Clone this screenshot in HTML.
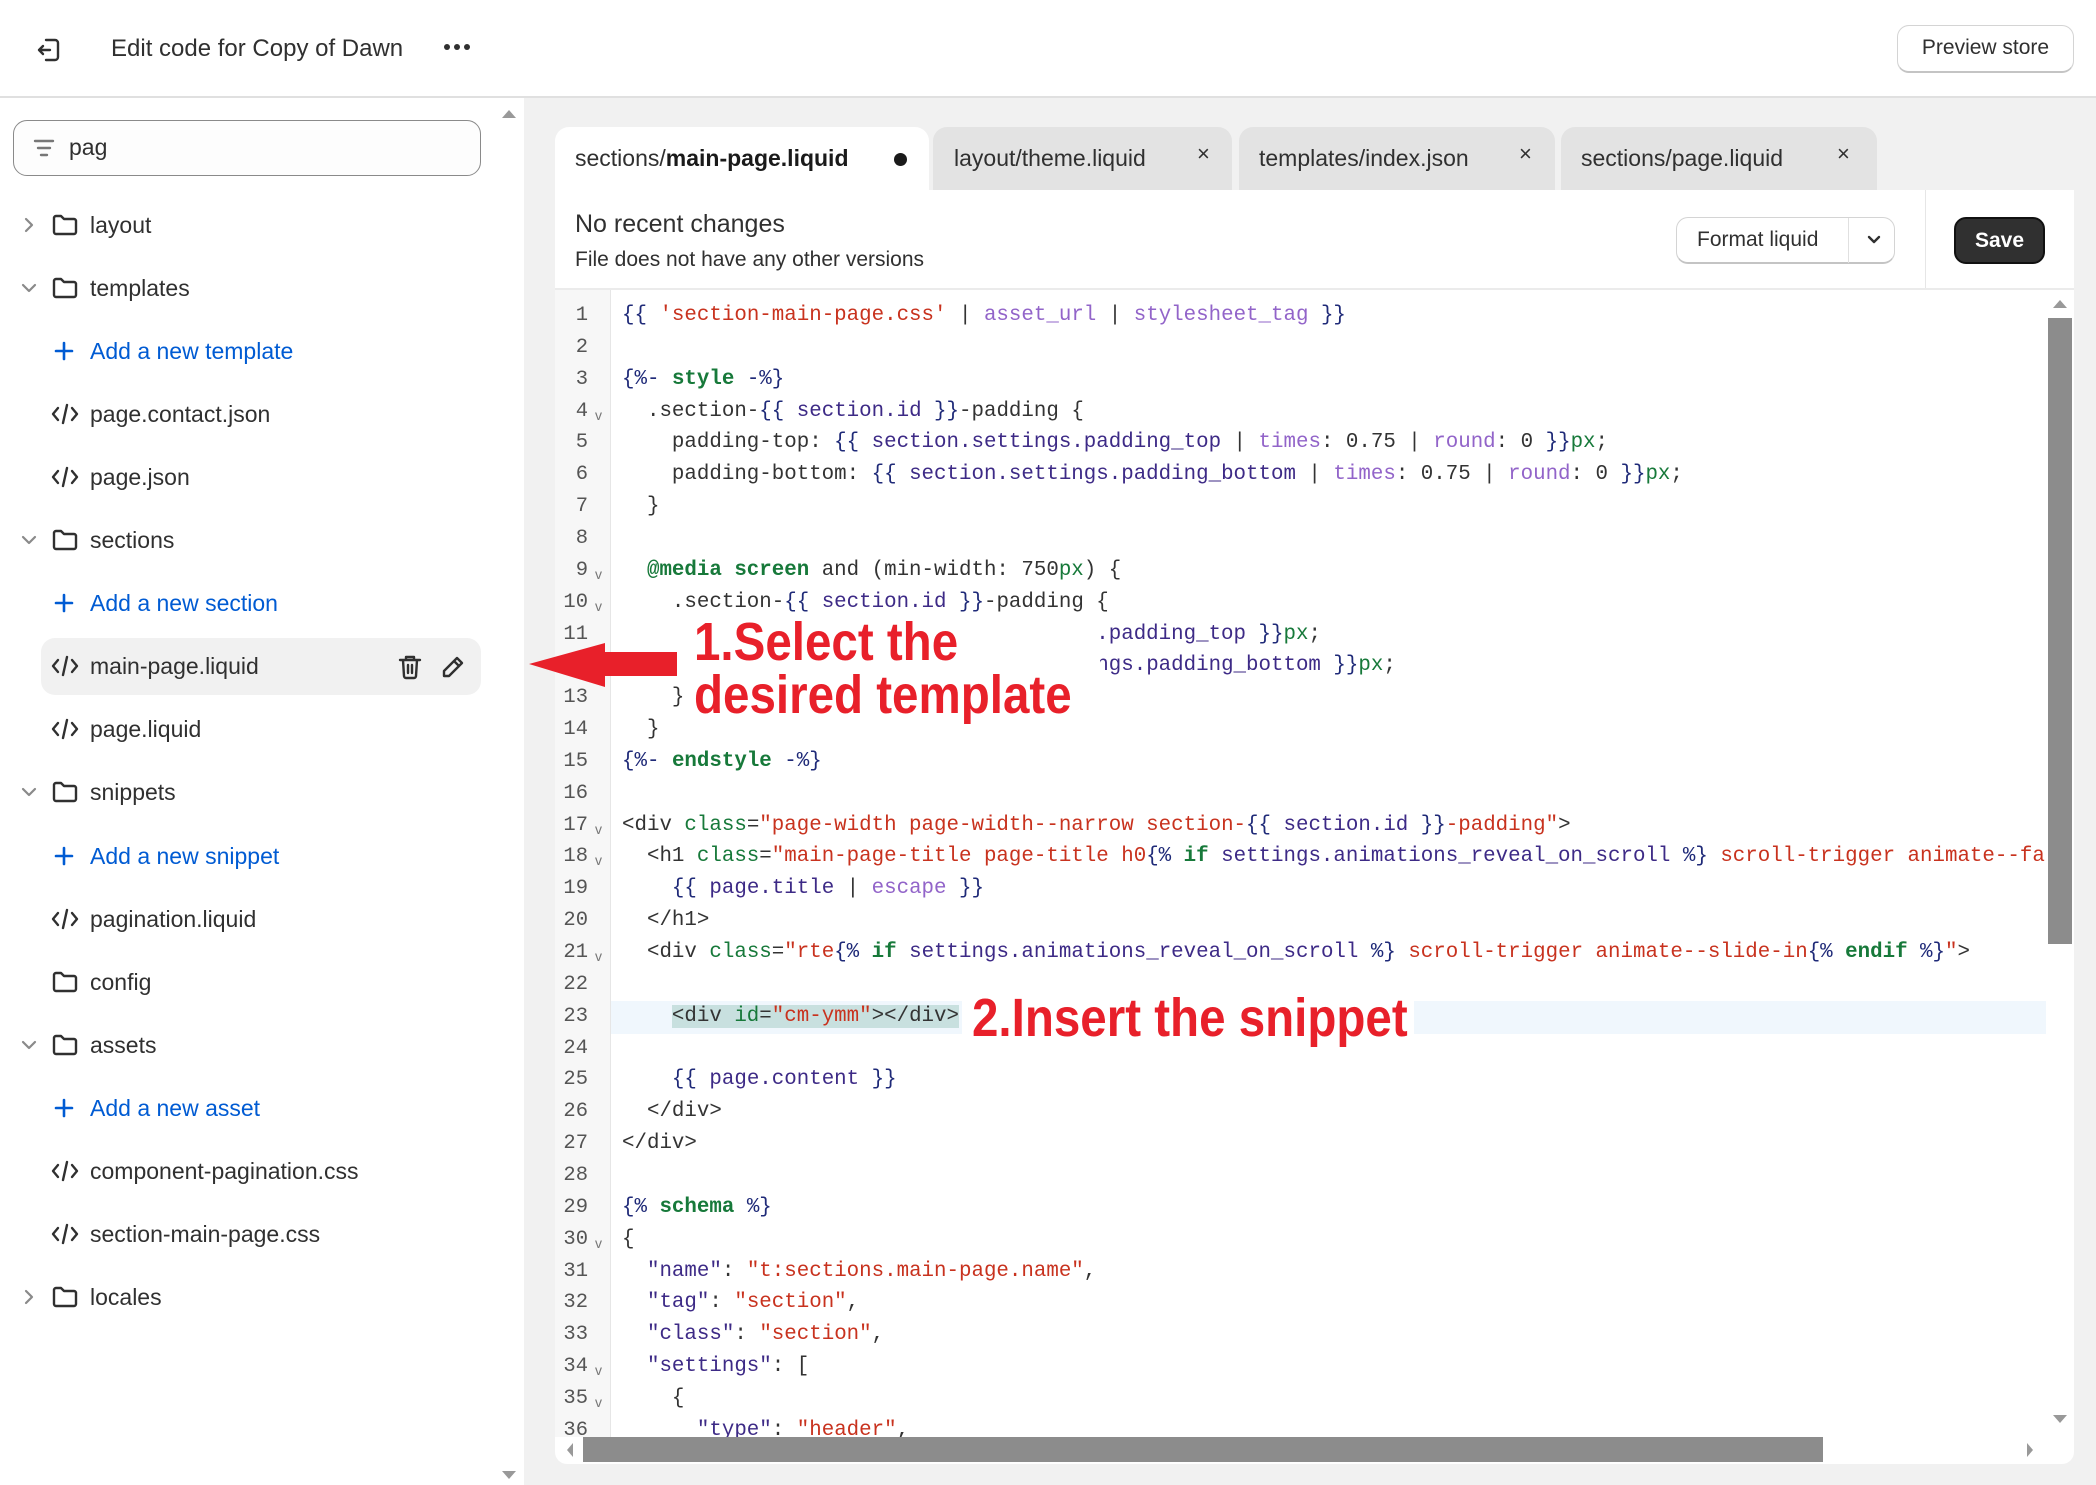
<!DOCTYPE html>
<html><head><meta charset="utf-8"><style>
*{box-sizing:border-box;margin:0;padding:0}
body{width:2096px;height:1485px;overflow:hidden;background:#f1f1f1;font-family:"Liberation Sans",sans-serif;color:#303030;position:relative}
.abs{position:absolute}
#hdr{left:0;top:0;width:2096px;height:98px;background:#fff;border-bottom:2px solid #e0e0e0}
#side{left:0;top:98px;width:524px;height:1387px;background:#fff}
.row{position:absolute;left:0;height:50px;width:524px;font-size:23px;line-height:50px}
.row .lbl{position:absolute;left:90px;top:0;white-space:nowrap}
.row svg{position:absolute}
.blue{color:#005bd3}
.tab{position:absolute;top:127px;height:64px;background:#e3e3e3;border-radius:14px 14px 0 0;font-size:23px;line-height:62px;color:#303030}
.tab .x{position:absolute;top:-4px;font-size:22px}
#code{left:555px;top:290px;width:1491px;height:1147px;background:#fff;overflow:hidden}
#gut{left:0;top:0;width:56px;height:1147px;background:#f7f7f7;border-right:1px solid #e6e6e6}
.ln{position:absolute;left:0;width:33px;text-align:right;font-family:"Liberation Mono",monospace;font-size:20.5px;color:#555;height:32px;line-height:32px}
.fd{position:absolute;left:40px;font-family:"Liberation Sans",sans-serif;font-size:14px;color:#777}
.cl{position:absolute;left:67px;font-family:"Liberation Mono",monospace;font-size:20.8px;height:32px;line-height:32px;white-space:pre;color:#333}
.d{color:#1f2a78}.v{color:#3d2a86}.f{color:#9264c9}.s{color:#c8321e}.k{color:#17793a;font-weight:bold}.g{color:#17793a}.t{color:#333}
.ann{position:absolute;color:#e8202a;font-weight:bold;font-size:54px;transform-origin:0 50%;transform:scaleX(.88);white-space:nowrap;line-height:54px}
</style></head><body>
<div id="hdr" class="abs">
 <svg class="abs" style="left:34px;top:35px" width="30" height="30" viewBox="0 0 30 30" fill="none" stroke="#303030" stroke-width="2.4" stroke-linecap="round" stroke-linejoin="round"><path d="M12 5h9a3 3 0 0 1 3 3v14a3 3 0 0 1-3 3h-9"/><path d="M16 15H5M9 11l-4 4 4 4"/></svg>
 <div class="abs" style="left:111px;top:35px;font-size:24px;color:#303030">Edit code for Copy of Dawn</div>
 <div class="abs" style="left:444px;top:44px;width:26px;height:8px">
  <span class="abs" style="left:0;top:0;width:6px;height:6px;border-radius:3px;background:#303030"></span>
  <span class="abs" style="left:10px;top:0;width:6px;height:6px;border-radius:3px;background:#303030"></span>
  <span class="abs" style="left:20px;top:0;width:6px;height:6px;border-radius:3px;background:#303030"></span>
 </div>
 <div class="abs" style="left:1897px;top:25px;width:177px;height:48px;border:1px solid #d4d4d4;border-bottom:2px solid #c4c4c4;border-radius:12px;font-size:21px;line-height:44px;text-align:center;color:#303030">Preview store</div>
</div>

<div id="side" class="abs">
 <div class="abs" style="left:502px;top:12px;width:0;height:0;border-left:7px solid transparent;border-right:7px solid transparent;border-bottom:8px solid #999"></div>
 <div class="abs" style="left:502px;top:1373px;width:0;height:0;border-left:7px solid transparent;border-right:7px solid transparent;border-top:8px solid #999"></div>
 <div class="abs" style="left:13px;top:22px;width:468px;height:56px;border:1.5px solid #8a8a8a;border-radius:14px;background:#fdfdfd">
  <svg class="abs" style="left:18px;top:16px" width="24" height="22" viewBox="0 0 24 22" stroke="#777" stroke-width="2.4" stroke-linecap="round"><path d="M3 4h18M6 11h12M9 18h6"/></svg>
  <div class="abs" style="left:55px;top:13px;font-size:23px;color:#303030">pag</div>
 </div>
</div>

<div class="abs" style="left:41px;top:638px;width:440px;height:57px;background:#f1f1f1;border-radius:14px"></div>
<div id="tree"></div>

<script>
var items=[
['r','F','layout'],['d','F','templates'],['','A','Add a new template'],['','C','page.contact.json'],['','C','page.json'],
['d','F','sections'],['','A','Add a new section'],['','C','main-page.liquid'],['','C','page.liquid'],['d','F','snippets'],
['','A','Add a new snippet'],['','C','pagination.liquid'],['','F','config'],['d','F','assets'],['','A','Add a new asset'],
['','C','component-pagination.css'],['','C','section-main-page.css'],['r','F','locales']];
var h='';
items.forEach(function(it,i){
 var cy=225+i*63.05, top=cy-25;
 h+='<div class="row" style="top:'+top+'px">';
 if(it[0]=='r')h+='<svg style="left:22px;top:17px" width="14" height="16" viewBox="0 0 14 16" fill="none" stroke="#8a8a8a" stroke-width="2.2" stroke-linecap="round" stroke-linejoin="round"><path d="M4 2l6 6-6 6"/></svg>';
 if(it[0]=='d')h+='<svg style="left:21px;top:19px" width="16" height="12" viewBox="0 0 16 12" fill="none" stroke="#8a8a8a" stroke-width="2.2" stroke-linecap="round" stroke-linejoin="round"><path d="M2 3l6 6 6-6"/></svg>';
 if(it[1]=='F')h+='<svg style="left:52px;top:13px" width="26" height="24" viewBox="0 0 26 24" fill="none" stroke="#303030" stroke-width="2.4" stroke-linejoin="round"><path d="M2 5a2 2 0 0 1 2-2h5l3 3h10a2 2 0 0 1 2 2v11a2 2 0 0 1-2 2H4a2 2 0 0 1-2-2z"/></svg>';
 if(it[1]=='C')h+='<svg style="left:51px;top:14px" width="28" height="22" viewBox="0 0 28 22" fill="none" stroke="#303030" stroke-width="2.4" stroke-linecap="round" stroke-linejoin="round"><path d="M7 5L2 11l5 6M21 5l5 6-5 6M16 2l-4 18"/></svg>';
 if(it[1]=='A')h+='<svg style="left:54px;top:15px" width="20" height="20" viewBox="0 0 20 20" stroke="#005bd3" stroke-width="2.6" stroke-linecap="round"><path d="M10 2v16M2 10h16"/></svg>';
 h+='<span class="lbl'+(it[1]=='A'?' blue':'')+'">'+it[2]+'</span>';
 if(i==7)h+='<svg style="left:398px;top:13px" width="24" height="26" viewBox="0 0 24 26" fill="none" stroke="#303030" stroke-width="2.4" stroke-linecap="round" stroke-linejoin="round"><path d="M2 6h20M8 6V3h8v3M5 6l1 16a2 2 0 0 0 2 2h8a2 2 0 0 0 2-2l1-16M10 11v8M14 11v8"/></svg><svg style="left:440px;top:13px" width="26" height="26" viewBox="0 0 26 26" fill="none" stroke="#303030" stroke-width="2.4" stroke-linecap="round" stroke-linejoin="round"><path d="M17 4l5 5L9 22H4v-5z M14 7l5 5"/></svg>';
 h+='</div>';
});
document.getElementById('tree').outerHTML=h;
</script>

<!-- tabs -->
<div class="tab" style="left:555px;width:374px;background:#fff"><span style="position:absolute;left:20px">sections/<b style="font-weight:600;color:#1a1a1a">main-page.liquid</b></span><span style="position:absolute;left:339px;top:26px;width:13px;height:13px;border-radius:7px;background:#1a1a1a"></span></div>
<div class="tab" style="left:933px;width:299px"><span style="position:absolute;left:21px">layout/theme.liquid</span><span class="x" style="left:264px">×</span></div>
<div class="tab" style="left:1239px;width:316px"><span style="position:absolute;left:20px">templates/index.json</span><span class="x" style="left:280px">×</span></div>
<div class="tab" style="left:1561px;width:316px"><span style="position:absolute;left:20px">sections/page.liquid</span><span class="x" style="left:276px">×</span></div>

<div class="abs" style="left:555px;top:190px;width:1519px;height:100px;background:#fff;border-bottom:2px solid #ebebeb">
 <div class="abs" style="left:20px;top:20px;font-size:25px;color:#303030">No recent changes</div>
 <div class="abs" style="left:20px;top:58px;font-size:21px;color:#303030">File does not have any other versions</div>
 <div class="abs" style="left:1121px;top:27px;width:219px;height:47px;border:1px solid #d4d4d4;border-bottom:2px solid #c4c4c4;border-radius:12px;background:#fff">
  <div class="abs" style="left:20px;top:0;line-height:44px;font-size:21px;color:#303030">Format liquid</div>
  <div class="abs" style="left:171px;top:0;width:1px;height:45px;background:#e0e0e0"></div>
  <svg class="abs" style="left:189px;top:16px" width="16" height="12" viewBox="0 0 16 12" fill="none" stroke="#303030" stroke-width="2.4" stroke-linecap="round" stroke-linejoin="round"><path d="M3 3l5 5 5-5"/></svg>
 </div>
 <div class="abs" style="left:1370px;top:0;width:1px;height:98px;background:#e6e6e6"></div>
 <div class="abs" style="left:1399px;top:27px;width:91px;height:47px;background:#303030;border:2px solid #111;border-radius:12px;color:#fff;font-weight:bold;font-size:21px;line-height:43px;text-align:center">Save</div>
</div>

<div id="code" class="abs">
 <div id="gut" class="abs"></div>
 <div class="abs" style="left:56px;top:711px;width:1435px;height:33px;background:#f0f7fd"></div>
 <div id="lines"></div>
</div>
<script>
var L=[
'<span class="d">{{</span> <span class="s">\'section-main-page.css\'</span> | <span class="f">asset_url</span> | <span class="f">stylesheet_tag</span> <span class="d">}}</span>',
'',
'<span class="d">{%-</span> <span class="k">style</span> <span class="d">-%}</span>',
'  .section-<span class="d">{{</span> <span class="v">section.id</span> <span class="d">}}</span>-padding {',
'    padding-top: <span class="d">{{</span> <span class="v">section.settings.padding_top</span> | <span class="f">times</span>: 0.75 | <span class="f">round</span>: 0 <span class="d">}}</span><span class="g">px</span>;',
'    padding-bottom: <span class="d">{{</span> <span class="v">section.settings.padding_bottom</span> | <span class="f">times</span>: 0.75 | <span class="f">round</span>: 0 <span class="d">}}</span><span class="g">px</span>;',
'  }',
'',
'  <span class="k">@media screen</span> and (min-width: 750<span class="g">px</span>) {',
'    .section-<span class="d">{{</span> <span class="v">section.id</span> <span class="d">}}</span>-padding {',
'      padding-top: <span class="d">{{</span> <span class="v">section.settings.padding_top</span> <span class="d">}}</span><span class="g">px</span>;',
'      padding-bottom: <span class="d">{{</span> <span class="v">section.settings.padding_bottom</span> <span class="d">}}</span><span class="g">px</span>;',
'    }',
'  }',
'<span class="d">{%-</span> <span class="k">endstyle</span> <span class="d">-%}</span>',
'',
'&lt;div <span class="g">class</span>=<span class="s">"page-width page-width--narrow section-</span><span class="d">{{</span> <span class="v">section.id</span> <span class="d">}}</span><span class="s">-padding"</span>&gt;',
'  &lt;h1 <span class="g">class</span>=<span class="s">"main-page-title page-title h0</span><span class="d">{%</span> <span class="k">if</span> <span class="v">settings.animations_reveal_on_scroll</span> <span class="d">%}</span><span class="s"> scroll-trigger animate--fade-in</span><span class="d">{%</span> <span class="k">endif</span> <span class="d">%}</span><span class="s">"</span>&gt;',
'    <span class="d">{{</span> <span class="v">page.title</span> | <span class="f">escape</span> <span class="d">}}</span>',
'  &lt;/h1&gt;',
'  &lt;div <span class="g">class</span>=<span class="s">"rte</span><span class="d">{%</span> <span class="k">if</span> <span class="v">settings.animations_reveal_on_scroll</span> <span class="d">%}</span><span class="s"> scroll-trigger animate--slide-in</span><span class="d">{%</span> <span class="k">endif</span> <span class="d">%}</span><span class="s">"</span>&gt;',
'',
'    <span style="background:#c8e0df">&lt;div <span class="g">id</span>=<span class="s">"cm-ymm"</span>&gt;&lt;/div&gt;</span>',
'',
'    <span class="d">{{</span> <span class="v">page.content</span> <span class="d">}}</span>',
'  &lt;/div&gt;',
'&lt;/div&gt;',
'',
'<span class="d">{%</span> <span class="k">schema</span> <span class="d">%}</span>',
'{',
'  <span class="v">"name"</span>: <span class="s">"t:sections.main-page.name"</span>,',
'  <span class="v">"tag"</span>: <span class="s">"section"</span>,',
'  <span class="v">"class"</span>: <span class="s">"section"</span>,',
'  <span class="v">"settings"</span>: [',
'    {',
'      <span class="v">"type"</span>: <span class="s">"header"</span>,'];
var folds=[4,9,10,17,18,21,30,34,35];
var o='';
L.forEach(function(c,i){var n=i+1,top=10+i*31.85;
 o+='<div class="ln" style="top:'+top+'px">'+n+'</div>';
 if(folds.indexOf(n)>=0)o+='<div class="fd" style="top:'+(top+11)+'px">v</div>';
 o+='<div class="cl" style="top:'+top+'px">'+c+'</div>';});
document.getElementById('lines').outerHTML=o;
</script>

<!-- scrollbars -->
<div class="abs" style="left:2046px;top:290px;width:28px;height:1147px;background:#fff"></div>
<div class="abs" style="left:2053px;top:300px;border-left:7px solid transparent;border-right:7px solid transparent;border-bottom:8px solid #999"></div>
<div class="abs" style="left:2048px;top:318px;width:24px;height:626px;background:#8c8c8c"></div>
<div class="abs" style="left:2053px;top:1415px;border-left:7px solid transparent;border-right:7px solid transparent;border-top:8px solid #999"></div>
<div class="abs" style="left:555px;top:1437px;width:1519px;height:27px;background:#fff;border-radius:0 0 12px 12px"></div>
<div class="abs" style="left:567px;top:1443px;border-top:7px solid transparent;border-bottom:7px solid transparent;border-right:6px solid #999"></div>
<div class="abs" style="left:583px;top:1437px;width:1240px;height:25px;background:#8c8c8c"></div>
<div class="abs" style="left:2027px;top:1443px;border-top:7px solid transparent;border-bottom:7px solid transparent;border-left:6px solid #999"></div>

<!-- annotations -->
<svg class="abs" style="left:525px;top:636px" width="160" height="56" viewBox="0 0 160 56"><path d="M4 28L80 7V16H152V40H80V51Z" fill="#e8202a"/></svg>
<div class="abs" style="left:690px;top:617px;width:410px;height:64px;background:#fff"></div>
<div class="ann" style="left:694px;top:615px">1.Select the</div>
<div class="ann" style="left:694px;top:668px">desired template</div>
<div class="abs" style="left:962px;top:997px;width:452px;height:40px;background:#fff"></div>
<div class="ann" style="left:972px;top:991px">2.Insert the snippet</div>
</body></html>
